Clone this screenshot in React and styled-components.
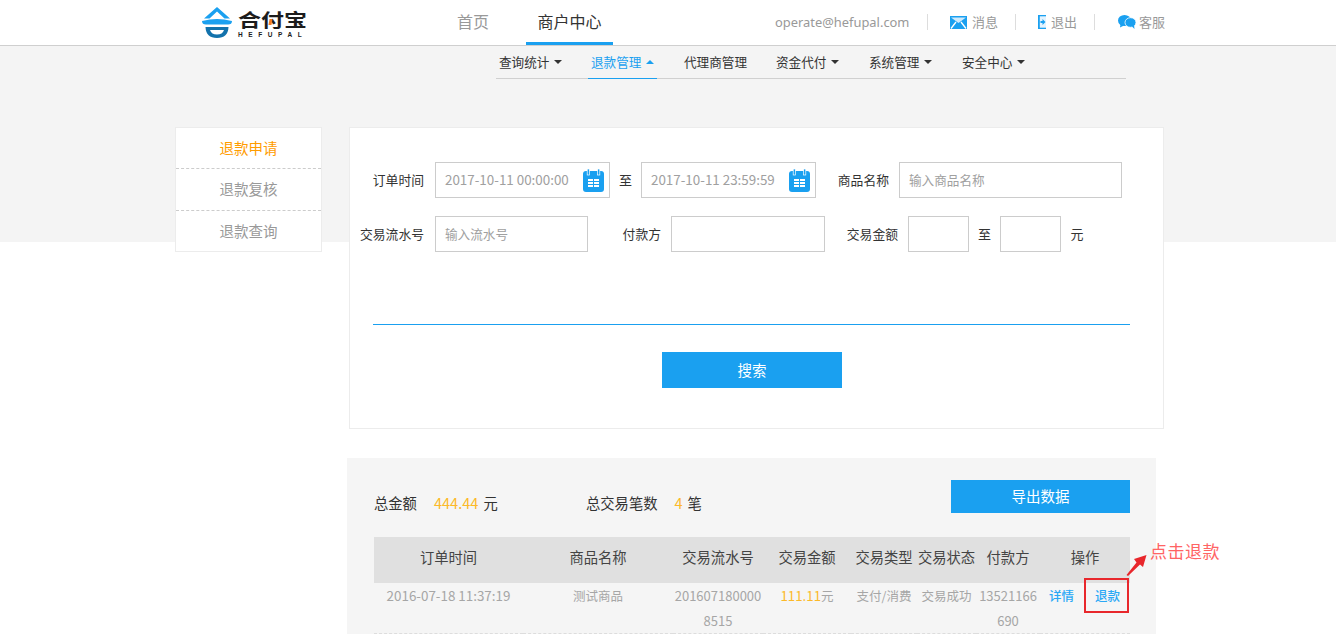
import React from "react";
import styled, { createGlobalStyle } from "styled-components";

const Global = createGlobalStyle`
  html, body { margin: 0; padding: 0; height: 634px; overflow: hidden; }
  body {
    background: linear-gradient(#fff 0 46px, #f4f4f4 46px 242px, #fff 242px);
    font-family: "Noto Sans CJK SC", "Noto Sans", sans-serif;
    font-size: 12.5px;
    color: #333;
  }
  * { box-sizing: border-box; }
`;

const Header = styled.header`
  height: 46px;
  border-bottom: 1px solid #cfcfcf;
  display: flex;
`;
const LogoWrap = styled.div`
  width: 457px;
  padding: 7px 0 0 202px;
  display: flex;
  gap: 6px;
`;
const LogoText = styled.div`
  position: relative;
  display: flex;
  flex-direction: column;
  color: #1c1c1c;
  width: 68px;
`;
const LogoCn = styled.span`
  font-size: 23px;
  font-weight: 700;
  line-height: 24px;
  height: 25px;
  white-space: nowrap;
  transform: scaleY(0.78);
  transform-origin: 50% 60%;
`;
const LogoDot = styled.i`
  position: absolute;
  left: 31px;
  top: 12px;
  width: 3px;
  height: 6px;
  background: #f47a20;
  transform: skewX(-10deg);
`;
const LogoEn = styled.span`
  font-family: "Liberation Sans", sans-serif;
  font-size: 6.5px;
  line-height: 6px;
  letter-spacing: 5.6px;
  font-weight: 700;
  white-space: nowrap;
`;
const MainNav = styled.nav`
  display: flex;
  width: 294px;
  gap: 37px;
`;
const MainNavItem = styled.div`
  height: 45px;
  padding: 0 ${(p) => (p.$active ? "11.5px" : "0")};
  font-size: 16px;
  line-height: 42px;
  color: ${(p) => (p.$active ? "#333" : "#999")};
  border-bottom: ${(p) => (p.$active ? "3px solid #1aa0f0" : "0")};
`;
const UserBar = styled.div`
  margin-left: 24px;
  display: flex;
  align-items: center;
  height: 44px;
  color: #999;
  font-size: 13px;
`;
const Email = styled.span`
  font-family: "Noto Sans", sans-serif;
  font-size: 12.9px;
  width: 152px;
`;
const UserLink = styled.span`
  display: flex;
  align-items: center;
  gap: ${(p) => p.$gap}px;
  height: 16px;
  border-left: 1px solid #ddd;
  padding-left: ${(p) => p.$pad}px;
  width: ${(p) => p.$w}px;
`;
const LinkText = styled.span`
  margin-top: -2px;
`;

const SubNav = styled.nav`
  margin-left: 496px;
  width: 630px;
  height: 33px;
  border-bottom: 1px solid #d0d0d0;
  display: flex;
`;
const SubItem = styled.div`
  width: ${(p) => p.$w}px;
  margin-right: ${(p) => p.$mr || 0}px;
  height: 33px;
  padding-left: 3px;
  font-size: 12.6px;
  line-height: 32px;
  color: ${(p) => (p.$active ? "#1aa0f0" : "#333")};
  border-bottom: ${(p) => (p.$active ? "1px solid #1aa0f0" : "0")};
  display: flex;
  align-items: flex-start;
  gap: 5px;
`;
const Caret = styled.i`
  width: 0;
  height: 0;
  margin-top: 14px;
  border-left: 4px solid transparent;
  border-right: 4px solid transparent;
  ${(p) =>
    p.$up
      ? "border-bottom: 4px solid #1aa0f0;"
      : "border-top: 4px solid #333;"}
`;

const Content = styled.div`
  display: grid;
  grid-template-columns: 147px 815px;
  column-gap: 27px;
  margin: 48px 0 0 175px;
  align-items: start;
`;
const Side = styled.aside`
  background: #fff;
  border: 1px solid #ececec;
  height: 125px;
`;
const SideItem = styled.div`
  height: ${(p) => p.$h}px;
  text-align: center;
  line-height: 39px;
  font-size: 14.5px;
  color: ${(p) => (p.$active ? "#ff9c00" : "#999")};
  border-bottom: ${(p) => (p.$last ? "0" : "1px dashed #ccc")};
`;
const Panel = styled.section`
  background: #fff;
  border: 1px solid #ececec;
  height: 302px;
  padding: 34px 33px 0 0;
`;
const FormRow = styled.div`
  display: flex;
  align-items: center;
  height: 36px;
  margin-bottom: 18px;
`;
const Label = styled.label`
  width: ${(p) => p.$w}px;
  text-align: right;
  color: #333;
  font-size: 12.8px;
  padding-bottom: 2px;
  flex: none;
`;
const Sep = styled.span`
  width: ${(p) => p.$w}px;
  text-align: center;
  color: #333;
  font-size: 13px;
  padding-bottom: 2px;
  flex: none;
`;
const Field = styled.div`
  width: ${(p) => p.$w}px;
  margin-left: ${(p) => p.$ml || 0}px;
  height: 36px;
  border: 1px solid #ccc;
  padding: 0 0 2px 9px;
  display: flex;
  align-items: center;
  justify-content: space-between;
  color: #a0a0a0;
  font-size: 12.6px;
  flex: none;
  background: #fff;
`;
const DateText = styled.span`
  font-size: 13.4px;
`;
const Rule = styled.div`
  margin: 72px 0 0 23px;
  height: 1px;
  background: #1aa0f0;
`;
const SearchBtn = styled.button`
  display: block;
  margin: 27px 0 0 312px;
  width: 180px;
  height: 36px;
  border: 0;
  padding: 0 0 2px;
  background: #1aa0f0;
  color: #fff;
  font: inherit;
  font-size: 14.5px;
`;

const Results = styled.section`
  position: relative;
  margin: 29px 0 0 347px;
  width: 809px;
  height: 260px;
  background: #f5f5f5;
  padding: 22px 26px 0 27px;
`;
const SummaryRow = styled.div`
  display: flex;
  height: 57px;
  justify-content: space-between;
  align-items: flex-start;
`;
const Summary = styled.div`
  display: flex;
  padding-top: 13px;
  font-size: 14.3px;
  line-height: 20px;
  color: #333;
`;
const SumBlock = styled.span`
  width: ${(p) => p.$w}px;
  white-space: pre;
`;
const Amount = styled.span`
  color: #fcb928;
  font-size: 14.6px;
  margin: 0 5px 0 17px;
`;
const ExportBtn = styled.button`
  width: 179px;
  height: 33px;
  border: 0;
  padding: 0 0 2px;
  background: #1aa0f0;
  color: #fff;
  font: inherit;
  font-size: 14.5px;
`;
const Table = styled.div`
  display: grid;
  grid-template-columns: 149px 150px 90px 88px 66px 59px 64px 90px;
  text-align: center;
`;
const Th = styled.div`
  height: 46px;
  background: #e0e0e0;
  line-height: 40px;
  font-size: 14.3px;
  color: #444;
  white-space: nowrap;
`;
const Td = styled.div`
  min-height: 49px;
  line-height: 25px;
  font-size: ${(p) => p.$s || 12.5}px;
  color: #a6a6a6;
  border-bottom: 1px dashed #ddd;
  word-break: break-all;
  padding: 0 ${(p) => p.$pad || 0}px;
`;
const Mid = styled.span`
  display: block;
  line-height: 25px;
  white-space: nowrap;
`;
const Gold = styled.span`
  color: #fcb928;
  font-size: 13.3px;
`;
const Actions = styled.div`
  display: flex;
  justify-content: space-between;
  padding: 0 10px 0 9px;
  color: #2aa8f5;
  font-size: 12.5px;
  font-weight: 500;
`;
const HighlightBox = styled.div`
  position: absolute;
  left: 737px;
  top: 120px;
  width: 45px;
  height: 35px;
  border: 2.5px solid #e8272c;
`;
const CalloutText = styled.div`
  position: absolute;
  left: 803px;
  top: 81px;
  color: #ff6464;
  font-size: 17px;
  line-height: 24px;
  letter-spacing: 0.5px;
  white-space: nowrap;
`;
const ArrowSvg = styled.svg`
  position: absolute;
  left: 776px;
  top: 86px;
`;

const Logo = () => (
  <svg width="30" height="31" viewBox="0 0 30 31">
    <path d="M15 0 L28 11.500 H22.500 L15 4.500 L7.500 11.500 H2 Z" fill="#1aa0f0" />
    <path d="M0 14 Q8 12 15 12 Q22 12 30 14 Q30 17.500 26 17.500 H4 Q0 17.500 0 14 Z" fill="#1aa0f0" />
    <path d="M3.500 20 H26.500 Q26 31 15 31 Q4 31 3.500 20 Z M8 23 Q9.500 27.500 15 27.500 Q20.500 27.500 22 23 Z" fill="#1272ac" fillRule="evenodd" />
  </svg>
);
const Mail = () => (
  <svg width="17" height="13" viewBox="0 0 17 13">
    <rect width="17" height="13" fill="#1aa0f0" />
    <path d="M1 1.500 L8.500 7 L16 1.500 Z" fill="#cfeafc" />
    <path d="M1 12.500 L6 6 M16 12.500 L11 6" stroke="#fff" strokeWidth="1.300" fill="none" />
  </svg>
);
const Exit = () => (
  <svg width="8" height="14" viewBox="0 0 8 14">
    <rect width="8" height="14" fill="#1aa0f0" />
    <rect x="1.800" y="1.300" width="6.200" height="11.400" fill="#e3f3fe" />
    <path d="M2.500 6 H4.500 V4 L7.500 7 L4.500 10 V8 H2.500 Z" fill="#1aa0f0" />
  </svg>
);
const Chat = () => (
  <svg width="18" height="14" viewBox="0 0 18 14">
    <ellipse cx="6.500" cy="5.500" rx="6.500" ry="5.500" fill="#1aa0f0" />
    <path d="M2.500 9 L2 12.500 L6 10.500 Z" fill="#1aa0f0" />
    <ellipse cx="12.500" cy="7.500" rx="5.500" ry="4.800" fill="#1aa0f0" stroke="#fff" strokeWidth="0.800" />
    <path d="M14 11.500 L16.500 14 L16 10 Z" fill="#1aa0f0" />
  </svg>
);
const CalendarSvg = styled.svg`
  margin: 2px 5px 0 0;
  flex: none;
`;
const Calendar = () => (
  <CalendarSvg width="21" height="23" viewBox="0 0 21 23">
    <path d="M3 2 H18 Q21 2 21 5 V20 Q21 23 18 23 H3 Q0 23 0 20 V5 Q0 2 3 2 Z" fill="#1aa0f0" />
    <rect x="4.200" y="0" width="2.200" height="6" fill="#1aa0f0" stroke="#fff" strokeWidth="0.700" />
    <rect x="14.600" y="0" width="2.200" height="6" fill="#1aa0f0" stroke="#fff" strokeWidth="0.700" />
    <path d="M5 10 H10 V12 H5 Z M11 10 H16 V12 H11 Z M5 13 H10 V15 H5 Z M11 13 H16 V15 H11 Z M5 16 H10 V18 H5 Z M11 16 H16 V18 H11 Z" fill="#fff" />
  </CalendarSvg>
);

export default function App() {
  return (
    <>
      <Global />
      <Header>
        <LogoWrap>
          <Logo />
          <LogoText>
            <LogoCn>合付宝</LogoCn>
            <LogoDot />
            <LogoEn>HEFUPAL</LogoEn>
          </LogoText>
        </LogoWrap>
        <MainNav>
          <MainNavItem>首页</MainNavItem>
          <MainNavItem $active>商户中心</MainNavItem>
        </MainNav>
        <UserBar>
          <Email>operate@hefupal.com</Email>
          <UserLink $pad={22} $w={88} $gap={5}><Mail /><LinkText>消息</LinkText></UserLink>
          <UserLink $pad={22} $w={79} $gap={5}><Exit /><LinkText>退出</LinkText></UserLink>
          <UserLink $pad={23} $w={72} $gap={3}><Chat /><LinkText>客服</LinkText></UserLink>
        </UserBar>
      </Header>
      <SubNav>
        <SubItem $w={92}>查询统计<Caret /></SubItem>
        <SubItem $w={69} $mr={24} $active>退款管理<Caret $up /></SubItem>
        <SubItem $w={92}>代理商管理</SubItem>
        <SubItem $w={93}>资金代付<Caret /></SubItem>
        <SubItem $w={93}>系统管理<Caret /></SubItem>
        <SubItem $w={93}>安全中心<Caret /></SubItem>
      </SubNav>
      <Content>
        <Side>
          <SideItem $active $h={41}>退款申请</SideItem>
          <SideItem $h={42}>退款复核</SideItem>
          <SideItem $h={40} $last>退款查询</SideItem>
        </Side>
        <Panel>
          <FormRow>
            <Label $w={74}>订单时间</Label>
            <Field $w={175} $ml={11}><DateText>2017-10-11 00:00:00</DateText><Calendar /></Field>
            <Sep $w={31}>至</Sep>
            <Field $w={175}><DateText>2017-10-11 23:59:59</DateText><Calendar /></Field>
            <Label $w={73}>商品名称</Label>
            <Field $w={223} $ml={10}>输入商品名称</Field>
          </FormRow>
          <FormRow>
            <Label $w={74}>交易流水号</Label>
            <Field $w={153} $ml={11}>输入流水号</Field>
            <Label $w={73}>付款方</Label>
            <Field $w={154} $ml={10}></Field>
            <Label $w={73}>交易金额</Label>
            <Field $w={61} $ml={10}></Field>
            <Sep $w={31}>至</Sep>
            <Field $w={61}></Field>
            <Sep $w={32}>元</Sep>
          </FormRow>
          <Rule />
          <SearchBtn>搜索</SearchBtn>
        </Panel>
      </Content>
      <Results>
        <SummaryRow>
          <Summary>
            <SumBlock $w={212}>总金额<Amount>444.44</Amount>元</SumBlock>
            <SumBlock $w={200}>总交易笔数<Amount>4</Amount>笔</SumBlock>
          </Summary>
          <ExportBtn>导出数据</ExportBtn>
        </SummaryRow>
        <Table>
          <Th>订单时间</Th>
          <Th>商品名称</Th>
          <Th>交易流水号</Th>
          <Th>交易金额</Th>
          <Th>交易类型</Th>
          <Th>交易状态</Th>
          <Th>付款方</Th>
          <Th>操作</Th>
          <Td $s={13.4}><Mid>2016-07-18 11:37:19</Mid></Td>
          <Td><Mid>测试商品</Mid></Td>
          <Td $s={13} $pad={1}>2016071800008515</Td>
          <Td><Mid><Gold>111.11</Gold>元</Mid></Td>
          <Td><Mid>支付/消费</Mid></Td>
          <Td><Mid>交易成功</Mid></Td>
          <Td $s={13} $pad={3}>13521166690</Td>
          <Td><Actions><Mid>详情</Mid><Mid>退款</Mid></Actions></Td>
        </Table>
        <HighlightBox />
        <ArrowSvg width="26" height="36" viewBox="0 0 26 36">
          <path d="M3.500 31 L13.500 18.500 L11 15 L23.500 11 L20 23 L17 20.500 L5 32 Z" fill="#e8272c" />
        </ArrowSvg>
        <CalloutText>点击退款</CalloutText>
      </Results>
    </>
  );
}
